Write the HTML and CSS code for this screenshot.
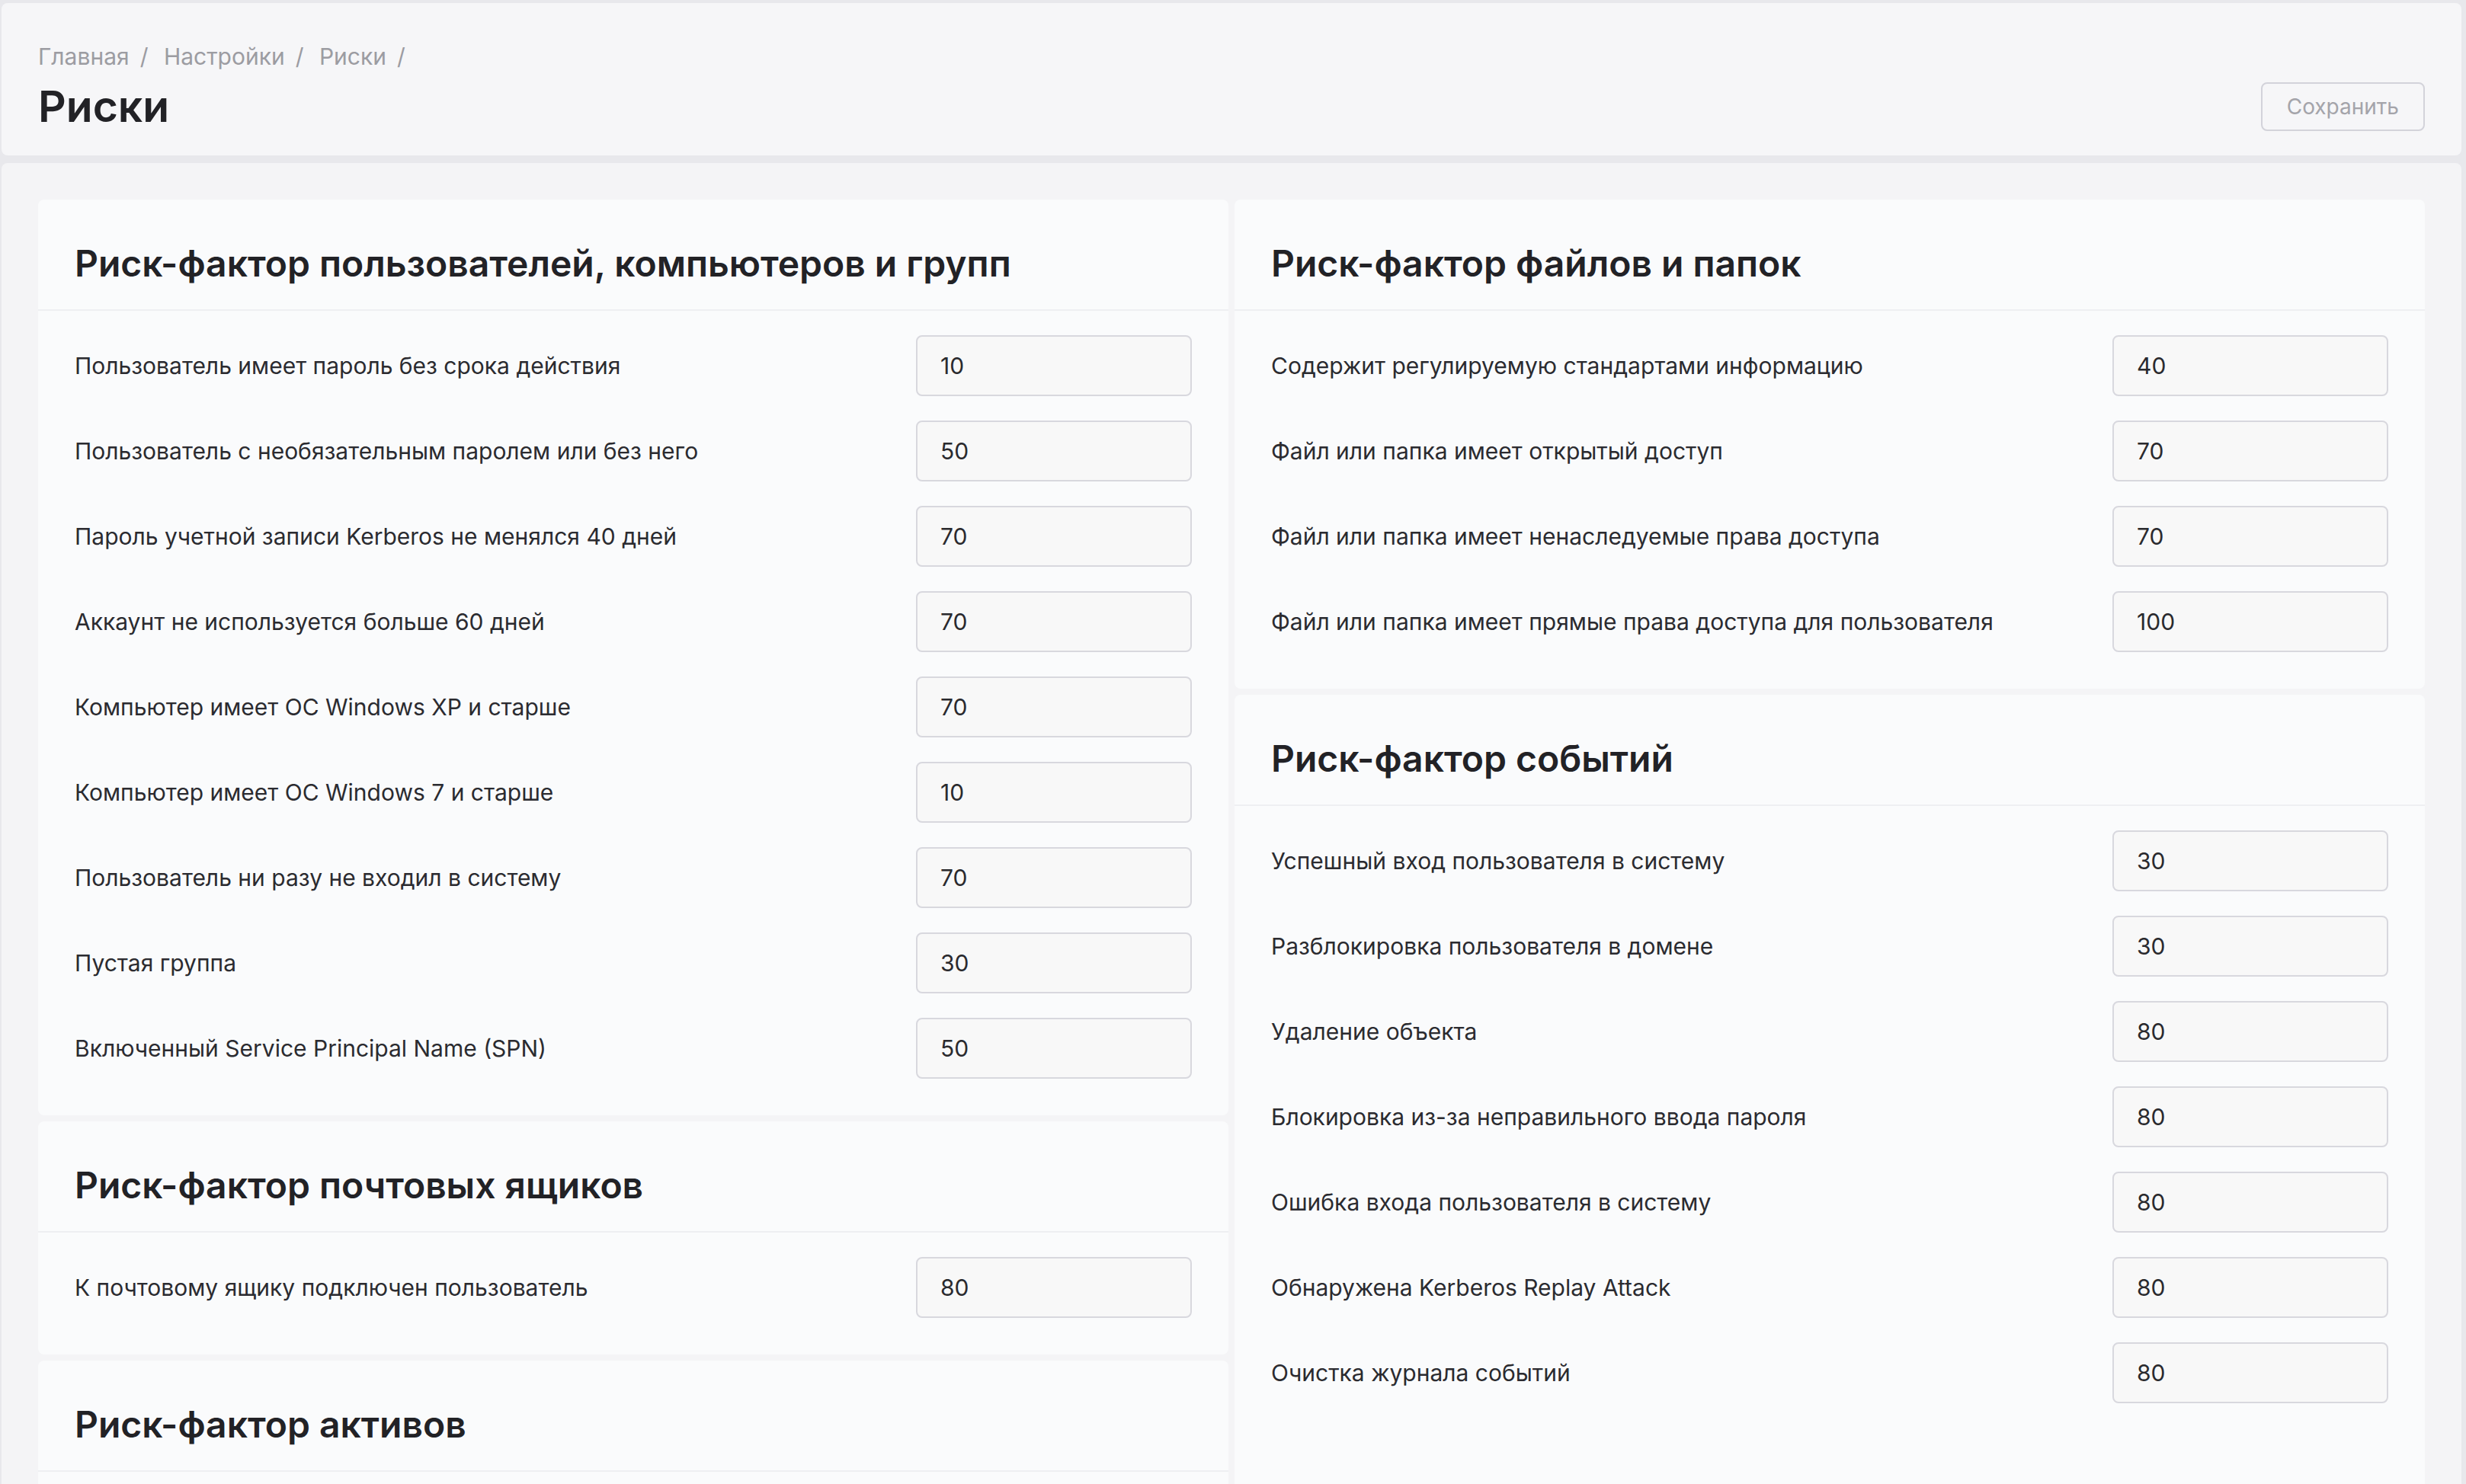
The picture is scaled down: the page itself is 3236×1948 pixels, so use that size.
FILE: index.html
```html
<!DOCTYPE html>
<html lang="ru">
<head>
  <meta charset="UTF-8" />
  <meta name="viewport" content="width=device-width, initial-scale=1" />
  <title>Риски</title>
  <link rel="stylesheet" href="styles.css">
</head>
<body>

  <header class="page-header">
    <nav class="breadcrumbs">
      <a href="#">Главная</a><span class="sep">/</span>
      <a href="#">Настройки</a><span class="sep">/</span>
      <a href="#">Риски</a><span class="sep">/</span>
    </nav>
    <div class="page-header-row">
      <h1 class="page-title">Риски</h1>
      <button class="btn-save" disabled>Сохранить</button>
    </div>
  </header>

  <main class="content">
    <div class="column">

      <section class="card">
        <div class="card-header">
          <h2 class="card-title">Риск-фактор пользователей, компьютеров и групп</h2>
        </div>
        <div class="card-body">
          <div class="field-row">
            <label>Пользователь имеет пароль без срока действия</label>
            <input class="field-input" type="text" value="10">
          </div>
          <div class="field-row">
            <label>Пользователь с необязательным паролем или без него</label>
            <input class="field-input" type="text" value="50">
          </div>
          <div class="field-row">
            <label>Пароль учетной записи Kerberos не менялся 40 дней</label>
            <input class="field-input" type="text" value="70">
          </div>
          <div class="field-row">
            <label>Аккаунт не используется больше 60 дней</label>
            <input class="field-input" type="text" value="70">
          </div>
          <div class="field-row">
            <label>Компьютер имеет ОС Windows XP и старше</label>
            <input class="field-input" type="text" value="70">
          </div>
          <div class="field-row">
            <label>Компьютер имеет ОС Windows 7 и старше</label>
            <input class="field-input" type="text" value="10">
          </div>
          <div class="field-row">
            <label>Пользователь ни разу не входил в систему</label>
            <input class="field-input" type="text" value="70">
          </div>
          <div class="field-row">
            <label>Пустая группа</label>
            <input class="field-input" type="text" value="30">
          </div>
          <div class="field-row">
            <label>Включенный Service Principal Name (SPN)</label>
            <input class="field-input" type="text" value="50">
          </div>
        </div>
      </section>

      <section class="card">
        <div class="card-header">
          <h2 class="card-title">Риск-фактор почтовых ящиков</h2>
        </div>
        <div class="card-body">
          <div class="field-row">
            <label>К почтовому ящику подключен пользователь</label>
            <input class="field-input" type="text" value="80">
          </div>
        </div>
      </section>

      <section class="card">
        <div class="card-header">
          <h2 class="card-title">Риск-фактор активов</h2>
        </div>
        <div class="card-body">
          <div class="field-row">
            <label>Актив не имеет ответственного</label>
            <input class="field-input" type="text" value="50">
          </div>
        </div>
      </section>

    </div>

    <div class="column">

      <section class="card">
        <div class="card-header">
          <h2 class="card-title">Риск-фактор файлов и папок</h2>
        </div>
        <div class="card-body">
          <div class="field-row">
            <label>Содержит регулируемую стандартами информацию</label>
            <input class="field-input" type="text" value="40">
          </div>
          <div class="field-row">
            <label>Файл или папка имеет открытый доступ</label>
            <input class="field-input" type="text" value="70">
          </div>
          <div class="field-row">
            <label>Файл или папка имеет ненаследуемые права доступа</label>
            <input class="field-input" type="text" value="70">
          </div>
          <div class="field-row">
            <label>Файл или папка имеет прямые права доступа для пользователя</label>
            <input class="field-input" type="text" value="100">
          </div>
        </div>
      </section>

      <section class="card card-grow">
        <div class="card-header">
          <h2 class="card-title">Риск-фактор событий</h2>
        </div>
        <div class="card-body">
          <div class="field-row">
            <label>Успешный вход пользователя в систему</label>
            <input class="field-input" type="text" value="30">
          </div>
          <div class="field-row">
            <label>Разблокировка пользователя в домене</label>
            <input class="field-input" type="text" value="30">
          </div>
          <div class="field-row">
            <label>Удаление объекта</label>
            <input class="field-input" type="text" value="80">
          </div>
          <div class="field-row">
            <label>Блокировка из-за неправильного ввода пароля</label>
            <input class="field-input" type="text" value="80">
          </div>
          <div class="field-row">
            <label>Ошибка входа пользователя в систему</label>
            <input class="field-input" type="text" value="80">
          </div>
          <div class="field-row">
            <label>Обнаружена Kerberos Replay Attack</label>
            <input class="field-input" type="text" value="80">
          </div>
          <div class="field-row">
            <label>Очистка журнала событий</label>
            <input class="field-input" type="text" value="80">
          </div>
        </div>
      </section>

    </div>
  </main>

</body>
</html>
```

FILE: styles.css
```css
html {
  background: #e8e8ec;
}
body {
  font-family: 'Inter', 'Noto Sans', sans-serif;
  margin: 4px 6px 0 2px;
  color: #2b2b30;
}

/* header */
.page-header {
  background: #f6f6f8;
  border-radius: 8px;
  padding: 50px 48px 30px 48px;
}
.breadcrumbs {
  font-size: 30px;
  line-height: 40px;
  color: #9c9ca2;
}
.breadcrumbs a {
  color: inherit;
  text-decoration: none;
}
.breadcrumbs .sep {
  margin: 0 12px 0 14px;
}
.page-header-row {
  display: flex;
  justify-content: space-between;
  align-items: center;
  margin-top: 12px;
}
.page-title {
  margin: 0;
  font-size: 57px;
  line-height: 68px;
  font-weight: 600;
  color: #222226;
}
.btn-save {
  font-family: inherit;
  font-size: 28px;
  line-height: 60px;
  padding: 0 32px;
  color: #a4a4aa;
  background: transparent;
  border: 2px solid #d3d3da;
  border-radius: 8px;
}

/* content */
.content {
  display: flex;
  gap: 8px;
  margin-top: 10px;
  padding: 48px;
  background: #f4f4f6;
  border-radius: 8px 8px 0 0;
}
.column {
  flex: 1;
  min-width: 0;
  display: flex;
  flex-direction: column;
  gap: 8px;
}
.card {
  background: #fafbfc;
  border-radius: 8px;
}
.card-grow {
  flex: 1;
}
.card-header {
  padding: 48px 48px 24px 48px;
  border-bottom: 2px solid #eeeff2;
}
.card-title {
  margin: 0;
  font-size: 48px;
  line-height: 72px;
  font-weight: 600;
  color: #222226;
}
.card-body {
  display: flex;
  flex-direction: column;
  gap: 32px;
  padding: 32px 48px 48px 48px;
}
.field-row {
  display: flex;
  justify-content: space-between;
  align-items: center;
  gap: 24px;
}
.field-row label {
  font-size: 30px;
  color: #2b2b30;
}
.field-input {
  box-sizing: border-box;
  width: 362px;
  height: 80px;
  padding: 0 30px;
  font-family: inherit;
  font-size: 30px;
  color: #2a2a2e;
  background: #f8f8f8;
  border: 2px solid #d8d8de;
  border-radius: 8px;
  outline: none;
}
```
